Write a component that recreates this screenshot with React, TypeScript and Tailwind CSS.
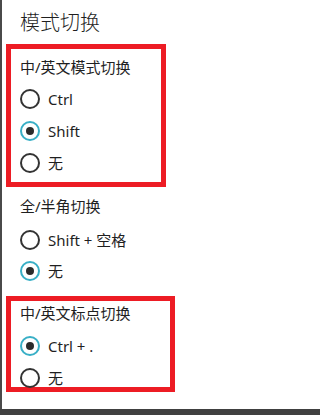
import React from "react";

const font = { fontFamily: '"Noto Sans", "Noto Sans CJK SC", sans-serif' };

function Radio({ label, checked }: { label: string; checked?: boolean }) {
  return (
    <div className="flex h-[20px] items-center gap-[8px]">
      {checked ? (
        <span className="flex h-[20px] w-[20px] items-center justify-center rounded-full border-2 border-[#38afc6] bg-white">
          <span className="h-[8px] w-[8px] rounded-full bg-[#2b2b2b]" />
        </span>
      ) : (
        <span className="h-[20px] w-[20px] rounded-full border-2 border-[#333333] bg-white" />
      )}
      <span className="text-[15px] leading-[20px] text-[#1f1f1f]">{label}</span>
    </div>
  );
}

export default function App() {
  return (
    <div className="flex h-[415px] w-full flex-col overflow-hidden bg-white" style={font}>
      <div className="flex flex-1 flex-col border-l-2 border-[#4a4a4a]">
        <div className="pl-[18px] pt-[9px] text-[20px] font-light leading-[28px] text-[#1f1f1f]">
          模式切换
        </div>
        <div className="ml-[4px] mt-[7px] flex h-[143px] w-[160px] flex-col border-[5px] border-[#ed1c24] pl-[9px] pt-[8px]">
          <div className="text-[15px] leading-[20px] text-[#1f1f1f]">中/英文模式切换</div>
          <div className="mt-[12px] flex flex-col gap-[12px]">
            <Radio label="Ctrl" />
            <Radio label="Shift" checked />
            <Radio label="无" />
          </div>
        </div>
        <div className="mt-[9px] flex flex-col pl-[18px]">
          <div className="text-[15px] leading-[20px] text-[#1f1f1f]">全/半角切换</div>
          <div className="mt-[14px] flex flex-col gap-[11px]">
            <Radio label="Shift + 空格" />
            <Radio label="无" checked />
          </div>
        </div>
        <div className="ml-[4px] mt-[15px] flex h-[96px] w-[169px] flex-col border-[5px] border-[#ed1c24] pl-[9px] pt-[2px]">
          <div className="text-[15px] leading-[20px] text-[#1f1f1f]">中/英文标点切换</div>
          <div className="mt-[13px] flex flex-col gap-[12px]">
            <Radio label="Ctrl + ." checked />
            <Radio label="无" />
          </div>
        </div>
      </div>
      <div className="h-[6px] bg-[#404040]" />
    </div>
  );
}
